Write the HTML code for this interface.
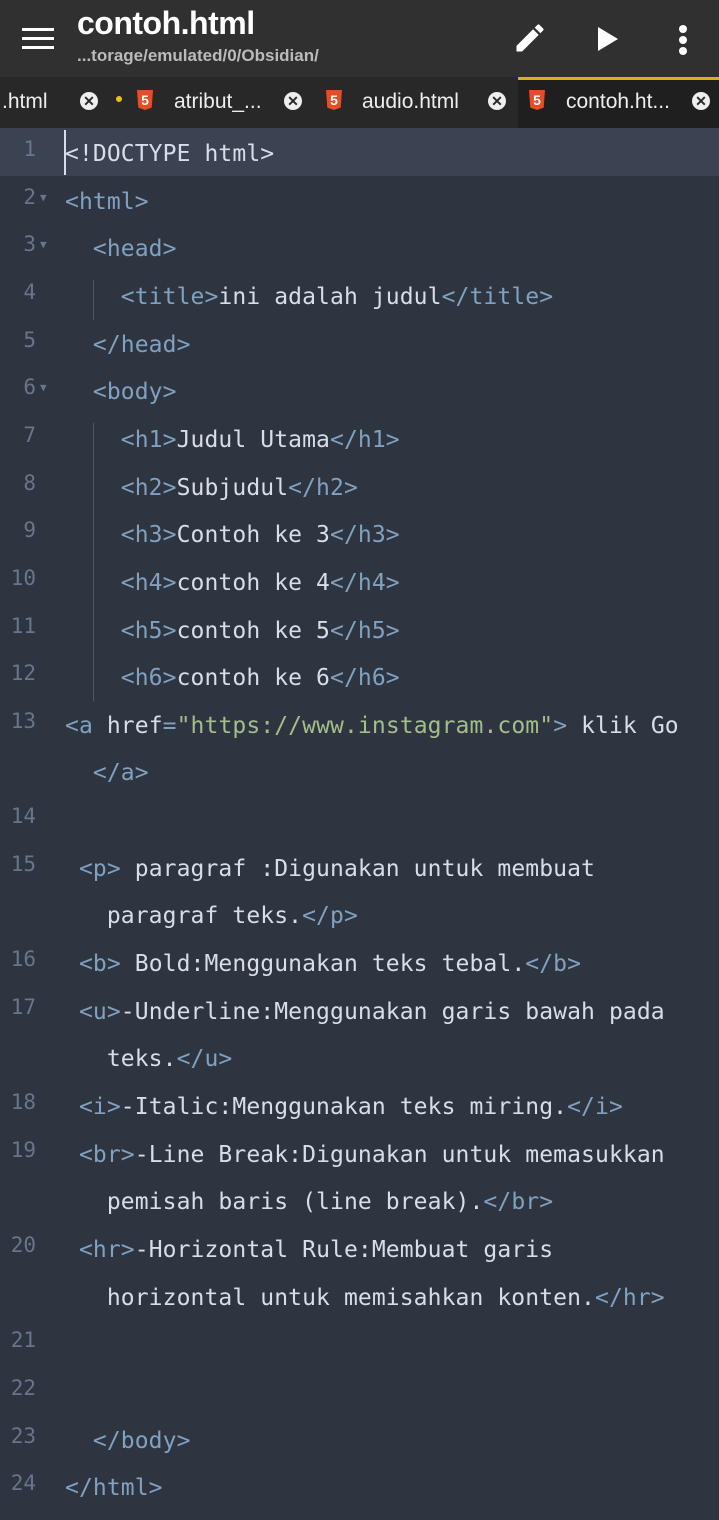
<!DOCTYPE html>
<html><head><meta charset="utf-8"><style>
body{margin:0;width:719px;height:1520px;background:#2e3440;overflow:hidden;font-family:"Liberation Sans",sans-serif;position:relative}
.hdr{position:absolute;left:0;top:0;width:719px;height:77px;background:#303030}
.tabs{position:absolute;left:0;top:77px;width:719px;height:51px;background:#282828}
.act{position:absolute;left:518px;top:77px;width:201px;height:51px;background:#1f1f1f;border-top:3px solid #d4b21c;box-sizing:border-box}
.t{position:absolute;color:#eee;font-size:21px;top:90px}
.x{position:absolute;top:92px;width:18px;height:18px;border-radius:50%;background:#eee;color:#282828;font-size:14px;font-weight:bold;text-align:center;line-height:18px}
.h5{position:absolute;top:90px;width:16px;height:20px;background:#e44d26;clip-path:polygon(0 0,100% 0,92% 88%,50% 100%,8% 88%);color:#fff;font-size:14px;font-weight:bold;text-align:center;line-height:20px}
.row{position:absolute;left:0;width:719px;height:47.65px;line-height:47.65px;font-family:"DejaVu Sans Mono","Liberation Mono",monospace;font-size:23px;letter-spacing:0.1px;color:#d8dee9;white-space:pre;margin-top:3px}
.n{position:absolute;left:0;width:36px;text-align:right;color:#68758c;font-size:21px;top:-5px;letter-spacing:0}
.c{position:absolute;left:65px}
.g{color:#81a1c1}.s{color:#a3be8c}
.f{position:absolute;left:40px;top:-5px;color:#68758c;font-size:11px}
.bar{position:absolute;width:1px;background:#4c566a}
</style></head><body>
<div class="hdr"></div>
<div style="position:absolute;left:22px;top:28px;width:32px;height:3px;background:#fff;box-shadow:0 9px 0 #fff,0 18px 0 #fff"></div>
<div style="position:absolute;left:77px;top:5px;color:#fff;font-size:32px;font-weight:bold;letter-spacing:-0.5px">contoh.html</div>
<div style="position:absolute;left:77px;top:46px;color:#bbb;font-size:17px;font-weight:bold">...torage/emulated/0/Obsidian/</div>
<svg style="position:absolute;left:512px;top:20px" width="36" height="36" viewBox="0 0 24 24"><path fill="#fff" d="M3 17.25V21h3.75L17.81 9.94l-3.75-3.750L3 17.25zM20.71 7.04a1 1 0 000-1.41l-2.34-2.34a1 1 0 00-1.41 0l-1.830 1.83 3.75 3.75 1.83-1.83z"/></svg>
<svg style="position:absolute;left:596px;top:26px" width="24" height="26" viewBox="0 0 24 26"><path fill="#fff" d="M2 1L22 13 2 25z"/></svg>
<div style="position:absolute;left:679px;top:25px;width:8px;height:8px;border-radius:50%;background:#fff;box-shadow:0 11px 0 #fff,0 22px 0 #fff"></div>
<div class="tabs"></div><div class="act"></div>
<div class="t" style="left:2px">.html</div><div class="x" style="left:80px">✕</div>
<div style="position:absolute;left:116px;top:96px;width:6px;height:6px;border-radius:50%;background:#e6c21c"></div>
<div class="h5" style="left:137px">5</div><div class="t" style="left:174px">atribut_...</div><div class="x" style="left:284px">✕</div>
<div class="h5" style="left:326px">5</div><div class="t" style="left:362px">audio.html</div><div class="x" style="left:488px">✕</div>
<div class="h5" style="left:529px">5</div><div class="t" style="left:566px">contoh.ht...</div><div class="x" style="left:692px">✕</div>
<div style="position:absolute;left:0;top:128px;width:719px;height:48px;background:#3b4252"></div>
<div style="position:absolute;left:64px;top:130px;width:2px;height:45px;background:#d8dee9"></div>
<div class="bar" style="left:93px;top:280px;height:40px"></div>
<div class="bar" style="left:93px;top:423px;height:278px"></div>

<div class="row" style="top:128px"><span class="n">1</span><span class="c">&lt;!DOCTYPE html&gt;</span></div>
<div class="row" style="top:175.65px"><span class="n">2</span><span class="f">▼</span><span class="c"><span class="g">&lt;html&gt;</span></span></div>
<div class="row" style="top:223.3px"><span class="n">3</span><span class="f">▼</span><span class="c"><span class="g">  &lt;head&gt;</span></span></div>
<div class="row" style="top:270.95px"><span class="n">4</span><span class="c"><span class="g">    &lt;title&gt;</span>ini adalah judul<span class="g">&lt;/title&gt;</span></span></div>
<div class="row" style="top:318.6px"><span class="n">5</span><span class="c"><span class="g">  &lt;/head&gt;</span></span></div>
<div class="row" style="top:366.25px"><span class="n">6</span><span class="f">▼</span><span class="c"><span class="g">  &lt;body&gt;</span></span></div>
<div class="row" style="top:413.9px"><span class="n">7</span><span class="c"><span class="g">    &lt;h1&gt;</span>Judul Utama<span class="g">&lt;/h1&gt;</span></span></div>
<div class="row" style="top:461.55px"><span class="n">8</span><span class="c"><span class="g">    &lt;h2&gt;</span>Subjudul<span class="g">&lt;/h2&gt;</span></span></div>
<div class="row" style="top:509.2px"><span class="n">9</span><span class="c"><span class="g">    &lt;h3&gt;</span>Contoh ke 3<span class="g">&lt;/h3&gt;</span></span></div>
<div class="row" style="top:556.85px"><span class="n">10</span><span class="c"><span class="g">    &lt;h4&gt;</span>contoh ke 4<span class="g">&lt;/h4&gt;</span></span></div>
<div class="row" style="top:604.5px"><span class="n">11</span><span class="c"><span class="g">    &lt;h5&gt;</span>contoh ke 5<span class="g">&lt;/h5&gt;</span></span></div>
<div class="row" style="top:652.15px"><span class="n">12</span><span class="c"><span class="g">    &lt;h6&gt;</span>contoh ke 6<span class="g">&lt;/h6&gt;</span></span></div>
<div class="row" style="top:699.8px"><span class="n">13</span><span class="c"><span class="g">&lt;a</span> href<span class="g">=</span><span class="s">"https://www.instagram.com"</span><span class="g">&gt;</span> klik Go</span></div>
<div class="row" style="top:747.45px"><span class="c"><span class="g">  &lt;/a&gt;</span></span></div>
<div class="row" style="top:795.1px"><span class="n">14</span></div>
<div class="row" style="top:842.75px"><span class="n">15</span><span class="c"> <span class="g">&lt;p&gt;</span> paragraf :Digunakan untuk membuat</span></div>
<div class="row" style="top:890.4px"><span class="c">   paragraf teks.<span class="g">&lt;/p&gt;</span></span></div>
<div class="row" style="top:938.05px"><span class="n">16</span><span class="c"> <span class="g">&lt;b&gt;</span> Bold:Menggunakan teks tebal.<span class="g">&lt;/b&gt;</span></span></div>
<div class="row" style="top:985.7px"><span class="n">17</span><span class="c"> <span class="g">&lt;u&gt;</span>-Underline:Menggunakan garis bawah pada</span></div>
<div class="row" style="top:1033.35px"><span class="c">   teks.<span class="g">&lt;/u&gt;</span></span></div>
<div class="row" style="top:1081px"><span class="n">18</span><span class="c"> <span class="g">&lt;i&gt;</span>-Italic:Menggunakan teks miring.<span class="g">&lt;/i&gt;</span></span></div>
<div class="row" style="top:1128.65px"><span class="n">19</span><span class="c"> <span class="g">&lt;br&gt;</span>-Line Break:Digunakan untuk memasukkan</span></div>
<div class="row" style="top:1176.3px"><span class="c">   pemisah baris (line break).<span class="g">&lt;/br&gt;</span></span></div>
<div class="row" style="top:1223.95px"><span class="n">20</span><span class="c"> <span class="g">&lt;hr&gt;</span>-Horizontal Rule:Membuat garis</span></div>
<div class="row" style="top:1271.6px"><span class="c">   horizontal untuk memisahkan konten.<span class="g">&lt;/hr&gt;</span></span></div>
<div class="row" style="top:1319.25px"><span class="n">21</span></div>
<div class="row" style="top:1366.9px"><span class="n">22</span></div>
<div class="row" style="top:1414.55px"><span class="n">23</span><span class="c"><span class="g">  &lt;/body&gt;</span></span></div>
<div class="row" style="top:1462.2px"><span class="n">24</span><span class="c"><span class="g">&lt;/html&gt;</span></span></div>
</body></html>
